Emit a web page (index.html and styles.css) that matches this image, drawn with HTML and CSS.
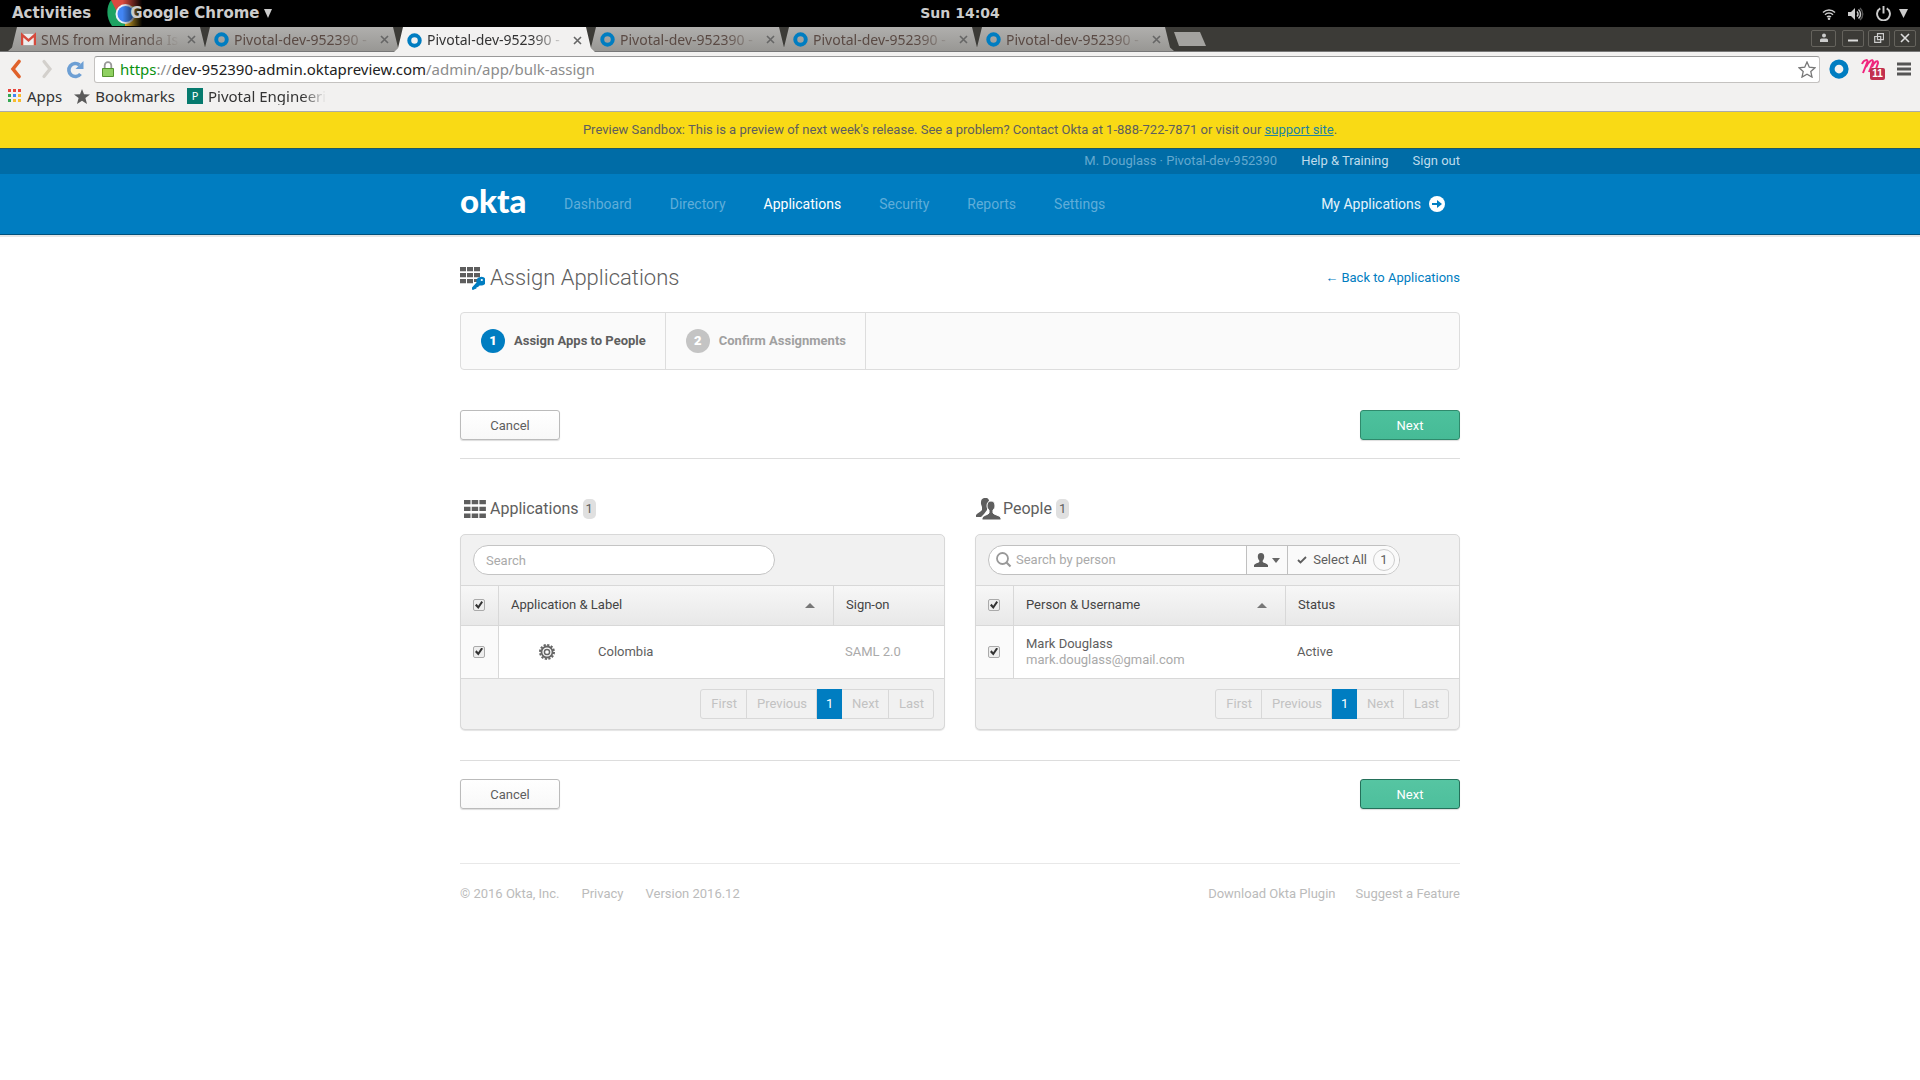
FILE: index.html
```html
<!DOCTYPE html>
<html lang="en">
<head>
<meta charset="utf-8">
<title>Assign Applications</title>
<link rel="stylesheet" href="styles.css">
</head>
<body>
<svg class="defs" aria-hidden="true">
  <symbol id="i-okta" viewBox="0 0 16 16"><circle cx="8" cy="8" r="5.6" fill="none" stroke="#007dc1" stroke-width="4.2"/></symbol>
  <symbol id="i-x" viewBox="0 0 9 9"><path d="M1 1l7 7M8 1L1 8" stroke="currentColor" stroke-width="1.6" fill="none"/></symbol>
  <symbol id="i-person" viewBox="0 0 14 14"><path d="M7 0c2.200 0 3.200 1.500 3.200 3.400 0 1.800-.6 3.100-1.500 4v1.500c.7.900 4.900 1.500 5.300 3.300V14H0v-1.800c.4-1.800 4.600-2.400 5.300-3.300V7.400c-.9-.9-1.500-2.200-1.500-4C3.800 1.500 4.800 0 7 0z" fill="currentColor"/></symbol>
  <symbol id="i-grid" viewBox="0 0 22 18"><path d="M0 0h6.500v4.300H0zM7.700 0h6.500v4.300H7.700zM15.400 0h6.500v4.300h-6.500zM0 6.800h6.500v4.300H0zM7.700 6.800h6.500v4.300H7.700zM15.400 6.800h6.500v4.300h-6.500zM0 13.600h6.500V18H0zM7.700 13.600h6.500V18H7.700zM15.400 13.600h6.500V18h-6.500z" fill="#5e5e5e"/></symbol>
</svg>

<header class="desktop-bar">
  <div class="desktop-left">
    <button class="plain">Activities</button>
    <button class="plain app-menu">
      <svg class="chrome-logo" viewBox="0 0 44 26" aria-hidden="true">
        <defs><linearGradient id="fade"><stop offset="0.35" stop-color="#000" stop-opacity="0"/><stop offset="0.8" stop-color="#000"/></linearGradient></defs>
        <path d="M4 0C-1 7-1 18 5 26h18l-8-12z" fill="#1da362"/>
        <path d="M4 0h40v6H20L10 12z" fill="#db4a3f"/>
        <path d="M18 6h26v20H18z" fill="#f5c02c"/>
        <circle cx="18.500" cy="14" r="10" fill="#eef2fb"/><circle cx="18.500" cy="14" r="8" fill="#4285f4"/>
        <path d="M0 0h44v26H0z" fill="url(#fade)"/>
      </svg>
      <span class="app-name">Google Chrome <svg width="8" height="9" viewBox="0 0 8 9"><path d="M0 0h8L4 9z" fill="#ccc"/></svg></span>
    </button>
  </div>
  <time class="clock">Sun 14:04</time>
  <div class="desktop-right">
    <svg width="14" height="12" viewBox="0 0 14 12"><path d="M1 4.500a8.500 8.500 0 0 1 12 0M3 6.800a5.600 5.600 0 0 1 8 0M5 9a2.800 2.800 0 0 1 4 0" fill="none" stroke="#ccc" stroke-width="1.500"/><circle cx="7" cy="10.700" r="1.300" fill="#ccc"/></svg>
    <svg width="16" height="14" viewBox="0 0 16 14"><path d="M0 5h3l4-4v12L3 9H0z" fill="#ccc"/><path d="M9 4.500a3.500 3.500 0 0 1 0 5M10.500 2.500a6 6 0 0 1 0 9" fill="none" stroke="#ccc" stroke-width="1.500"/><path d="M12 1a8 8 0 0 1 0 12" fill="none" stroke="#555" stroke-width="1.500"/></svg>
    <svg width="15" height="15" viewBox="0 0 14 14"><path d="M4 2.200a6 6 0 1 0 6 0M7 0v7" fill="none" stroke="#ccc" stroke-width="1.800"/></svg>
    <svg class="caret" width="9" height="9" viewBox="0 0 9 9"><path d="M0 0h9L4.500 9z" fill="#ccc"/></svg>
  </div>
</header>

<div class="tab-strip">
  <div class="tabs">
    <div class="tab"><svg class="fav" viewBox="0 0 16 16"><path d="M0 2h16v12H0z" fill="#eee"/><path d="M1.200 14V3l6.800 6 6.800-6v11" fill="none" stroke="#d54b3d" stroke-width="2.400"/></svg><a href="#">SMS from Miranda Is</a><button aria-label="Close tab"><svg><use href="#i-x"/></svg></button></div>
    <div class="tab"><svg class="fav"><use href="#i-okta"/></svg><a href="#">Pivotal-dev-952390 -</a><button aria-label="Close tab"><svg><use href="#i-x"/></svg></button></div>
    <div class="tab active"><svg class="fav"><use href="#i-okta"/></svg><a href="#">Pivotal-dev-952390 -</a><button aria-label="Close tab"><svg><use href="#i-x"/></svg></button></div>
    <div class="tab"><svg class="fav"><use href="#i-okta"/></svg><a href="#">Pivotal-dev-952390 -</a><button aria-label="Close tab"><svg><use href="#i-x"/></svg></button></div>
    <div class="tab"><svg class="fav"><use href="#i-okta"/></svg><a href="#">Pivotal-dev-952390 -</a><button aria-label="Close tab"><svg><use href="#i-x"/></svg></button></div>
    <div class="tab"><svg class="fav"><use href="#i-okta"/></svg><a href="#">Pivotal-dev-952390 -</a><button aria-label="Close tab"><svg><use href="#i-x"/></svg></button></div>
    <button class="new-tab" aria-label="New tab"></button>
  </div>
  <div class="window-controls">
    <button class="profile" aria-label="Profile"><svg viewBox="0 0 10 10"><circle cx="5" cy="2.500" r="2" fill="#ccc"/><path d="M1 9V7q0-1.500 1.500-1.500h5Q9 5.500 9 7v2z" fill="#ccc"/></svg></button>
    <button aria-label="Minimize"><svg viewBox="0 0 10 10"><path d="M0 7.500h10" stroke="#ddd" stroke-width="2"/></svg></button>
    <button aria-label="Restore"><svg viewBox="0 0 10 10"><path d="M3.500.7h6v6h-6zM.7 3.500h6v5.800h-6z" fill="none" stroke="#ccc" stroke-width="1.200"/></svg></button>
    <button aria-label="Close"><svg viewBox="0 0 10 10"><path d="M1 1l8 8M9 1L1 9" stroke="#ddd" stroke-width="1.600"/></svg></button>
  </div>
</div>

<div class="toolbar">
  <button class="plain back" aria-label="Back"><svg width="12" height="20" viewBox="0 0 12 20"><path d="M9 2.500L3 10l6 7.500" fill="none" stroke="#e0622b" stroke-width="3.600" stroke-linecap="round"/></svg></button>
  <button class="plain" aria-label="Forward"><svg width="12" height="20" viewBox="0 0 12 20"><path d="M3 2.500L9 10l-6 7.500" fill="none" stroke="#d3d0cc" stroke-width="3.200" stroke-linecap="round"/></svg></button>
  <button class="plain" aria-label="Reload"><svg width="18" height="19" viewBox="0 0 18 19"><path d="M14.500 14A6.500 6.500 0 1 1 13.500 5" fill="none" stroke="#6d9fd4" stroke-width="3.600"/><path d="M17.500 1v8h-8z" fill="#6d9fd4"/></svg></button>
  <div class="omnibox">
    <svg width="12" height="16" viewBox="0 0 12 16"><path d="M2.700 8V4.500a3.300 3.300 0 0 1 6.600 0V8" fill="none" stroke="#999" stroke-width="1.800"/><path d="M.5 7.500h11v8H.5z" fill="#8fd061" stroke="#55932f"/></svg>
    <div class="url" role="textbox" aria-label="Address"><span class="scheme">https</span><span class="dim">://</span>dev-952390-admin.oktapreview.com<span class="dim">/admin/app/bulk-assign</span></div>
    <svg class="star" width="18" height="17" viewBox="0 0 18 17"><path d="M9 1l2.300 5.200 5.700.6-4.200 3.800 1.200 5.500L9 13.300 4 16.100l1.200-5.500L1 6.800l5.700-.6z" fill="#fff" stroke="#777" stroke-width="1.300"/></svg>
  </div>
  <div class="extensions">
    <svg width="20" height="20"><use href="#i-okta"/></svg>
    <span class="ext-m"><svg width="20" height="16" viewBox="0 0 20 16"><path d="M1 5C3 0 8 0 6 4L2 14M5 8C8 2 12-1 12 3L8 13M11 8c2-5 6-8 6-4l-2 6q-1 3 4 1" fill="none" stroke="#f0257e" stroke-width="2"/></svg><span class="ext-badge">11</span></span>
    <button class="plain" aria-label="Menu"><svg width="14" height="14" viewBox="0 0 14 14"><path d="M0 2h14M0 7h14M0 12h14" stroke="#555" stroke-width="3"/></svg></button>
  </div>
</div>

<nav class="bookmarks" aria-label="Bookmarks">
  <a href="#"><svg width="14" height="14" viewBox="0 0 14 14"><path d="M0 0h3v3H0zM5 0h3v3H5zM10 0h3v3h-3z" fill="#e8453c"/><path d="M0 5h3v3H0z" fill="#34a853"/><path d="M5 5h3v3H5z" fill="#4285f4"/><path d="M10 5h3v3h-3z" fill="#f9bb2d"/><path d="M0 10h3v3H0z" fill="#34a853"/><path d="M5 10h3v3H5zM10 10h3v3h-3z" fill="#f9bb2d"/></svg>Apps</a>
  <a href="#"><svg width="16" height="15" viewBox="0 0 16 15"><path d="M8 0l2 5.200 6 .3-4.600 3.600L13 15l-5-3.300L3 15l1.600-5.900L0 5.500l6-.3z" fill="#5a5a5a"/></svg>Bookmarks</a>
  <a href="#"><span class="p-icon">P</span><span class="bm-fade">Pivotal Engineeri</span></a>
</nav>

<div class="sandbox-banner">Preview Sandbox: This is a preview of next week's release. See a problem? Contact Okta at 1-888-722-7871 or visit our <a href="#">support site</a>.</div>

<div class="account-bar">
  <div class="wrap">
    <span class="who">M. Douglass · Pivotal-dev-952390</span>
    <a href="#">Help &amp; Training</a>
    <a href="#">Sign out</a>
  </div>
</div>
<div class="main-bar">
  <div class="wrap">
    <a class="brand" href="#">okta</a>
    <nav class="main-nav">
      <a href="#">Dashboard</a><a href="#">Directory</a><a href="#" class="current">Applications</a><a href="#">Security</a><a href="#">Reports</a><a href="#">Settings</a>
    </nav>
    <a class="my-apps" href="#">My Applications <svg width="16" height="16" viewBox="0 0 16 16"><circle cx="8" cy="8" r="8" fill="#fff"/><path d="M3 7h5V4l5 4-5 4V9H3z" fill="#007dc1"/></svg></a>
  </div>
</div>

<main class="wrap page">
  <div class="title-row">
    <h1><svg width="25" height="23" viewBox="0 0 25 23"><path d="M0 0h6v4.300H0zM7 0h6v4.300H7zM14 0h6v4.300h-6zM0 6h6v4.300H0zM7 6h6v4.300H7zM14 6h6v4.300h-6zM0 12h6v4.300H0zM7 12h6v4.300H7zM14 12h3v3h-3z" fill="#5e5e5e"/><path d="M19.500 10.300a4.400 4.400 0 1 1 .8 8.100l-1.300.3-.8 1.300-1.500.2-.5 1.600-1.500.2-.7.700h-2v-2.300l4.500-5a4.400 4.400 0 0 1 3-5.100z" fill="#007dc1"/><circle cx="21.800" cy="13" r="1.100" fill="#fff"/></svg>Assign Applications</h1>
    <a href="#">← Back to Applications</a>
  </div>

  <ol class="steps">
    <li class="on"><b>1</b>Assign Apps to People</li>
    <li><b>2</b>Confirm Assignments</li>
  </ol>

  <div class="actions top">
    <button class="btn">Cancel</button>
    <button class="btn primary">Next</button>
  </div>

  <div class="columns">
    <section>
      <h2><svg class="grid-icon" width="22" height="18"><use href="#i-grid"/></svg>Applications <span class="count">1</span></h2>
      <div class="panel">
        <div class="panel-top"><input class="search" type="search" placeholder="Search" aria-label="Search applications"></div>
        <table>
          <colgroup><col class="c-check"><col><col class="c-signon"></colgroup>
          <thead><tr><th><input type="checkbox" checked aria-label="Select all applications"></th><th><span class="sorted">Application &amp; Label</span></th><th>Sign-on</th></tr></thead>
          <tbody><tr><td><input type="checkbox" checked aria-label="Select Colombia"></td><td><span class="app"><svg width="16" height="16" viewBox="0 0 16 16"><circle cx="8" cy="8" r="7" fill="none" stroke="#666" stroke-width="2" stroke-dasharray="2.200 1.465"/><circle cx="8" cy="8" r="5.500" fill="none" stroke="#666" stroke-width="1.800"/><circle cx="8" cy="8" r="2.600" fill="none" stroke="#666" stroke-width="1.500"/></svg>Colombia</span></td><td class="muted">SAML 2.0</td></tr></tbody>
        </table>
        <div class="panel-foot"><div class="pager"><button disabled>First</button><button disabled>Previous</button><button class="now">1</button><button disabled>Next</button><button disabled>Last</button></div></div>
      </div>
    </section>
    <section>
      <h2><svg class="people-icon" width="25" height="22" viewBox="0 0 25 22"><path d="M8 0c3-1 5 1 5 3l-2 4v5l-3 4-3 3H0v-2c1-2 5-3 6-5l0-3L5 6c0-3 0-5 3-6z" fill="#5e5e5e"/><path d="M15 3c3 0 4 2 4 5 0 2-1 3-2 4v3c1 2 7 2 8 5v2H6v-2c1-3 6-3 7-5v-3c-1-1-2-2-2-4 0-3 1-5 4-5z" fill="#5e5e5e" stroke="#fff"/></svg>People <span class="count">1</span></h2>
      <div class="panel">
        <div class="panel-top">
          <div class="person-search">
            <svg width="16" height="16" viewBox="0 0 16 16"><circle cx="6.500" cy="6.500" r="5.500" fill="none" stroke="#999" stroke-width="1.800"/><path d="M10.500 10.500l4 4" stroke="#999" stroke-width="2.200"/></svg>
            <input type="search" placeholder="Search by person" aria-label="Search by person">
            <button class="kind" aria-label="Search type"><svg width="14" height="14"><use href="#i-person"/></svg><svg width="8" height="5" viewBox="0 0 8 5"><path d="M0 0h8L4 5z" fill="#666"/></svg></button>
            <button class="all"><svg width="10" height="8" viewBox="0 0 10 8"><path d="M1 4l2.500 2.500L9 1" fill="none" stroke="#5e5e5e" stroke-width="1.800"/></svg>Select All<span>1</span></button>
          </div>
        </div>
        <table>
          <colgroup><col class="c-check"><col><col class="c-status"></colgroup>
          <thead><tr><th><input type="checkbox" checked aria-label="Select all people"></th><th><span class="sorted">Person &amp; Username</span></th><th>Status</th></tr></thead>
          <tbody><tr><td><input type="checkbox" checked aria-label="Select Mark Douglass"></td><td>Mark Douglass<br><span class="muted">mark.douglass@gmail.com</span></td><td>Active</td></tr></tbody>
        </table>
        <div class="panel-foot"><div class="pager"><button disabled>First</button><button disabled>Previous</button><button class="now">1</button><button disabled>Next</button><button disabled>Last</button></div></div>
      </div>
    </section>
  </div>

  <div class="actions bottom">
    <button class="btn">Cancel</button>
    <button class="btn primary">Next</button>
  </div>

  <footer>
    <span>© 2016 Okta, Inc.</span><a href="#">Privacy</a><a href="#">Version 2016.12</a>
    <a class="push" href="#">Download Okta Plugin</a><a class="last" href="#">Suggest a Feature</a>
  </footer>
</main>
</body>
</html>
```
FILE: styles.css
```css
* { box-sizing: border-box; }
body { margin: 0; background: #fff; color: #5e5e5e; font: 13px/16px Roboto, sans-serif; }
a { color: inherit; text-decoration: none; }
button { font: inherit; color: inherit; margin: 0; padding: 0; cursor: pointer; }
svg { flex: none; display: block; }
.defs { display: none; }
.plain { border: 0; background: none; }

/* desktop bar */
.desktop-bar { display: grid; grid-template-columns: 1fr auto 1fr; height: 27px; padding: 0 12px; background: #000; color: #ccc; font: bold 15px/27px "DejaVu Sans", sans-serif; }
.desktop-left { display: flex; align-items: flex-start; gap: 16px; }
.app-menu { display: grid; justify-items: start; }
.chrome-logo { grid-area: 1 / 1; width: 44px; height: 26px; }
.app-name { grid-area: 1 / 1; display: flex; align-items: center; gap: 4px; height: 27px; padding-left: 23px; }
.clock { font-size: 14px; }
.desktop-right { display: flex; justify-content: flex-end; align-items: center; gap: 12px; }
.caret { margin-left: -4px; }

/* browser tabs */
.tab-strip { display: flex; justify-content: space-between; height: 25px; background: #3c3b37; font: 14px/24px "Noto Sans", sans-serif; padding: 0 4px 0 8px; border-bottom: 1px solid #777; }
.tabs { display: flex; align-items: flex-end; }
.tab { position: relative; display: flex; align-items: center; gap: 5px; width: 201px; height: 24px; margin-right: -8px; padding: 1px 11px 0 13px; color: #5a4a44; }
.tab::before { content: ""; position: absolute; inset: 0; z-index: -1; background: linear-gradient(#b0afad, #989794); clip-path: polygon(0 100%, 4px 85%, 9px 0, 192px 0, 197px 85%, 201px 100%); }
.tab-strip, .tab { isolation: isolate; }
.tab.active { z-index: 1; height: 25px; margin-bottom: -1px; color: #333; }
.tab.active::before { background: #f2f1f0; }
.fav { width: 15px; height: 15px; }
.tab a { flex: 1; white-space: nowrap; mask-image: linear-gradient(90deg, #000 75%, transparent); }
.tab button { border: 0; background: none; padding: 2px; color: #666; }
.tab button svg { width: 9px; height: 9px; }
.new-tab { width: 32px; height: 14px; margin: 0 0 5px 8px; border: 0; background: #a3a29f; clip-path: polygon(0 0, 26px 0, 32px 100%, 5px 100%); }
.window-controls { display: flex; gap: 4px; align-items: center; padding-bottom: 2px; }
.window-controls button { display: grid; place-items: center; width: 22px; height: 17px; border: 1px solid #65635d; border-radius: 2px; background: none; }
.window-controls .profile { width: 25px; margin-right: 2px; }
.window-controls svg { width: 10px; height: 10px; }

/* address bar */
.toolbar { display: flex; align-items: center; gap: 13px; height: 35px; padding: 0 9px 1px 10px; background: #f2f1f0; }
.back { margin-right: 6px; }
.omnibox { flex: 1; display: flex; align-items: center; gap: 6px; height: 27px; margin-left: -3px; padding: 0 3px 0 7px; border: 1px solid #c4c2c0; border-top-color: #999; border-radius: 3px; background: #fff; }
.url { flex: 1; color: #222; font: 15px/24px "Noto Sans", sans-serif; }
.scheme { color: #0a9210; }
.dim { color: #8c8c8c; }
.extensions { display: flex; align-items: center; gap: 12px; margin-left: -4px; }
.ext-m { position: relative; width: 24px; height: 20px; }
.ext-badge { position: absolute; left: 9px; top: 9px; width: 15px; border-radius: 2px; background: #c2304f; color: #fff; text-align: center; font: bold 10px/12px "Liberation Sans", sans-serif; }
.bookmarks { display: flex; align-items: flex-start; gap: 12px; height: 25px; padding: 0 8px; background: #f2f1f0; border-bottom: 1px solid #aaa; color: #333; font: 15px/18px "Noto Sans", sans-serif; }
.bookmarks a { display: flex; align-items: center; gap: 5px; }
.p-icon { width: 16px; background: #067a6e; color: #fff; text-align: center; font-size: 11px; line-height: 16px; }
.bm-fade { mask-image: linear-gradient(90deg, #000 80%, transparent); }

/* product header */
.wrap { width: 1000px; max-width: 100%; margin: 0 auto; }
.sandbox-banner { background: #f9da15; border-bottom: 1px solid #1f5a64; text-align: center; line-height: 36px; }
.sandbox-banner a { color: #2383a0; text-decoration: underline; }
.account-bar { padding-bottom: 2px; background: #006ca6; color: #bfdcec; line-height: 23px; }
.account-bar .wrap { display: flex; justify-content: flex-end; gap: 24px; }
.who { color: #64a9cf; }
.main-bar { background: #007dc1; border-bottom: 1px solid #00507c; box-shadow: 0 2px 0 #e6e6e6; color: #5fadd9; font-size: 14px; }
.main-bar .wrap { display: flex; align-items: center; height: 60px; }
.brand { width: 104px; color: #fff; font: 900 33px/56px Lato, sans-serif; margin-top: -8px; }
.main-nav { display: flex; gap: 38px; }
.main-nav .current { color: #fff; }
.my-apps { display: flex; align-items: center; gap: 8px; margin-left: auto; padding-right: 15px; color: #e6f3fa; }

/* page */
.page { padding-top: 31px; }
.title-row { display: flex; justify-content: space-between; align-items: center; height: 24px; color: #007dc1; }
h1 { display: flex; gap: 5px; align-items: center; margin: 0; font-size: 22px; font-weight: 300; line-height: 24px; color: #5e5e5e; }
.steps { display: flex; height: 58px; margin: 22px 0 40px; padding: 0; list-style: none; border: 1px solid #ddd; border-radius: 4px; background: #fafafa; font-weight: bold; }
.steps li { display: flex; align-items: center; gap: 9px; padding: 0 19px 0 20px; border-right: 1px solid #ddd; color: #a0a0a0; }
.steps b { width: 24px; border-radius: 12px; background: #c4c4c4; color: #fff; line-height: 24px; text-align: center; }
.steps .on { color: #5e5e5e; }
.steps .on b { background: #007dc1; }
.actions { display: flex; justify-content: space-between; }
.actions.top { padding-bottom: 18px; border-bottom: 1px solid #ddd; }
.actions.bottom { margin-top: 30px; padding-top: 18px; border-top: 1px solid #ddd; }
.btn { width: 100px; height: 30px; padding-top: 1px; border: 1px solid #bbb; border-radius: 3px; background: linear-gradient(#fff, #f8f8f8); box-shadow: 0 1px 1px #ddd; }
.btn.primary { border-color: #2f8a6c; background: linear-gradient(#4dc19d, #46bb96); color: #fff; }
.bottom .btn.primary { border-color: #24705a; background: linear-gradient(#56c5a2, #4dbf9c); }
.columns { display: grid; grid-template-columns: 1fr 1fr; gap: 30px; padding-top: 38px; }
h2 { display: flex; align-items: center; margin: 0 0 13px; height: 24px; font-size: 16px; font-weight: 400; line-height: 24px; }
.grid-icon { margin: 0 4px; }
.people-icon { margin: 0 2px 0 1px; }
.count { margin-left: 4px; padding: 0 3px; border-radius: 5px; background: #e0e0e0; font-size: 13px; line-height: 20px; min-width: 13px; text-align: center; }
.panel { border: 1px solid #d8d8d8; border-radius: 5px; background: #f1f1f1; box-shadow: 0 1px 1px #e4e4e4; }
.panel-top { padding: 10px 12px; }
.search { display: block; width: 302px; height: 30px; padding: 0 12px; border: 1px solid #c4c4c4; border-radius: 15px; background: #fff; font: inherit; outline: 0; }
input::placeholder { color: #aaa; opacity: 1; }
.person-search { display: flex; align-items: center; width: 412px; height: 30px; padding-left: 7px; border: 1px solid #c0c0c0; border-radius: 15px; background: #fff; overflow: hidden; }
.person-search input { flex: 1; min-width: 0; border: 0; padding: 0 4px; background: none; font: inherit; outline: 0; }
.person-search button { display: flex; align-items: center; align-self: stretch; border: 0; border-left: 1px solid #c0c0c0; background: #fafafa; }
.kind { gap: 4px; }
.person-search .kind { padding: 0 7px; }
.all { gap: 6px; }
.person-search .all { padding: 0 4px 0 9px; }
.all span { width: 22px; border: 1px solid #ccc; border-radius: 11px; line-height: 20px; }
table { width: 100%; table-layout: fixed; border-collapse: separate; border-spacing: 0; }
.c-check { width: 38px; }
.c-signon { width: 110px; }
.c-status { width: 173px; }
th { height: 41px; padding: 0 12px 1px; border: solid #d8d8d8; border-width: 1px 1px 1px 0; background: linear-gradient(#f7f7f7, #e8e8e8); text-align: left; font-weight: 400; color: #444; }
td { height: 52px; padding: 0 12px 1px; background: #fff; }
th:last-child { border-right: 0; }
td:first-child { background: #fafafa; border-right: 1px solid #d8d8d8; }
td:last-child { padding-left: 11px; }
.sorted { display: flex; justify-content: space-between; align-items: center; padding-right: 6px; }
.sorted::after { content: ""; border: 5px solid transparent; border-top: 0; border-bottom-color: #777; }
.app { display: flex; align-items: center; gap: 43px; padding-left: 28px; }
.muted { color: #aaa; }
input[type="checkbox"] { appearance: none; display: grid; place-items: center; width: 12px; height: 12px; margin: 0; border: 1px solid #aaa; border-radius: 2px; background: #eee; }
input[type="checkbox"]:checked::before { content: ""; width: 8px; height: 8px; background: #333; clip-path: polygon(0 55%, 20% 35%, 40% 58%, 80% 0, 100% 15%, 42% 100%); }
.panel-foot { display: flex; justify-content: flex-end; padding: 10px; border-top: 1px solid #d8d8d8; }
.pager { display: flex; height: 30px; border: 1px solid #d8d8d8; border-radius: 3px; }
.pager button { padding: 0 9px 0 10px; border: 0; border-right: 1px solid #d8d8d8; background: none; color: #c2c2c2; }
.pager button:last-child { border: 0; }
.pager .now { width: 25px; margin: -1px 0; border: 0; background: #007dc1; color: #fff; padding: 0; }
footer { display: flex; margin-top: 54px; padding-top: 22px; border-top: 1px solid #e8e8e8; gap: 22px; color: #bbb; }
.push { margin-left: auto; }
.last { margin-left: -2px; }
```
